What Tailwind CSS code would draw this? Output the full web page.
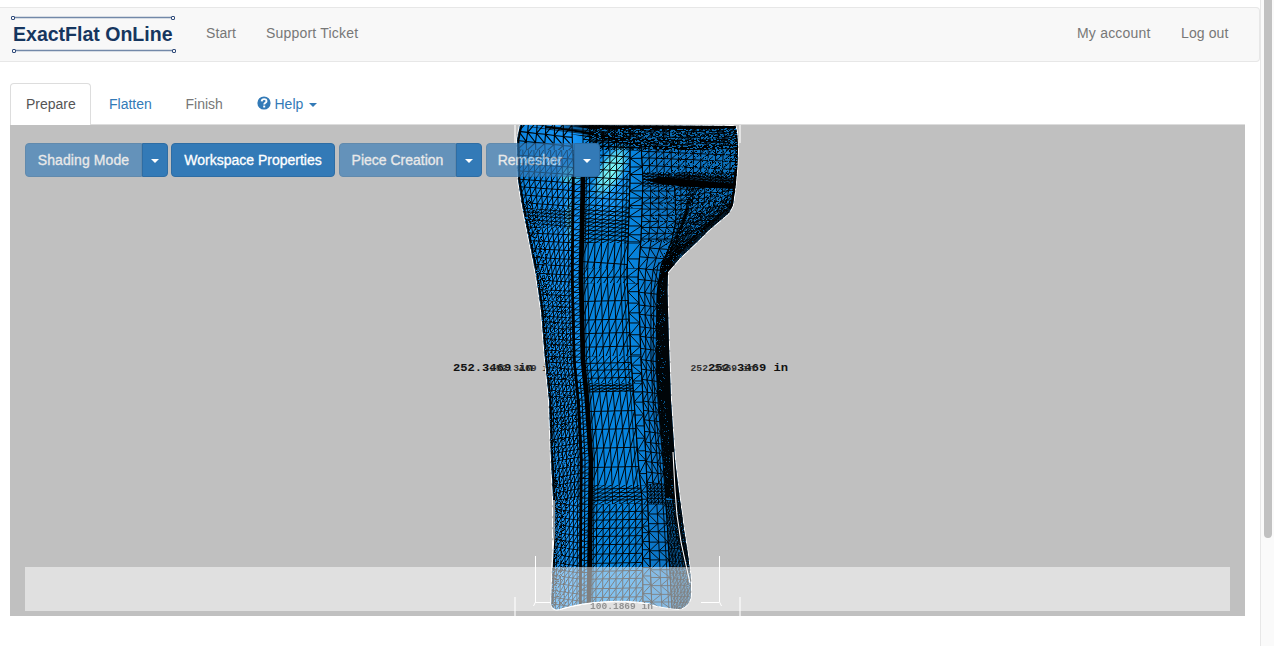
<!DOCTYPE html>
<html lang="en">
<head>
<meta charset="utf-8">
<title>ExactFlat OnLine</title>
<script src="https://cdn.jsdelivr.net/npm/@tailwindcss/browser@4"></script>
</head>
<body class="flex h-[646px] overflow-hidden bg-white font-['Liberation_Sans',Arial,sans-serif] text-[14px] leading-5 text-[#777]">
<div class="w-[1260px] shrink-0 pt-[7px]">
  <nav class="flex h-[55px] rounded-r border border-l-0 border-[#e7e7e7] bg-[#f8f8f8] pl-[10px]">
    <svg class="h-[53px] w-[168px]" viewBox="10 8 168 53" fill="#f8f8f8" stroke="#324d7c">
      <path d="M14 17.5H171M16 50.5H172" stroke="#7288a8" stroke-width="1.4"/>
      <rect x="11.5" y="16.5" width="3" height="3" rx=".5"/><rect x="171.500" y="16.500" width="3" height="3" rx=".5"/>
      <rect x="12.500" y="49.500" width="3" height="3" rx=".5"/><rect x="172.500" y="49.500" width="3" height="3" rx=".5"/>
      <text x="13" y="41" font-size="20" font-weight="700" fill="#16365f" stroke="none" textLength="159.500" lengthAdjust="spacingAndGlyphs">ExactFlat OnLine</text>
    </svg>
    <div class="flex grow pt-[15px] pl-[28px]">
      <a class="w-[60px] tracking-[0.1px]">Start</a><a class="tracking-[0.2px]">Support Ticket</a>
      <a class="ml-auto w-[104px] tracking-[0.2px]">My account</a><a class="w-[78px] tracking-[0.1px]">Log out</a>
    </div>
  </nav>
  <div class="mt-[21px] ml-[10px] w-[1235px]">
    <div class="flex h-[42px] border-b border-[#ddd]">
      <a class="h-[42px] w-[81px] rounded-t border border-b-0 border-[#ddd] bg-white pt-[10px] pl-[15px] text-[#555]">Prepare</a>
      <a class="w-[76.500px] pt-[11px] pl-[18px] text-[#337ab7]">Flatten</a>
      <a class="w-[89px] pt-[11px] pl-[18px]">Finish</a>
      <a class="flex pt-[11px] text-[#337ab7]">
        <svg class="mt-[2px] mr-[4px] h-[14px] w-[14px]" viewBox="0 0 14 14"><circle cx="7" cy="7" r="6.600" fill="#337ab7"/><path d="M4.700 5.400C4.800 2.400 9.500 2.300 9.500 5.200C9.500 6.900 7.200 6.700 7.200 8.600" fill="none" stroke="#fff" stroke-width="1.900"/><rect x="6.200" y="9.600" width="2" height="1.900" fill="#fff"/></svg>
        Help<svg class="mt-[9px] ml-[6px] h-[4px] w-[8px]" viewBox="0 0 8 4"><path d="M0 0H8L4 4Z" fill="#337ab7"/></svg></a>
    </div>
    <main class="relative flex h-[491px] flex-col justify-between overflow-hidden bg-[#c0c0c0] px-[15px] pt-[18px] pb-[5px]">
      <svg class="absolute inset-0" width="1235" height="491" viewBox="10 125 1235 491" font-family="'Liberation Mono',monospace" font-weight="700" fill="#111">
        <g font-size="10"><text x="453" y="371" textLength="80" lengthAdjust="spacingAndGlyphs">252.3469 in</text><text x="708" y="371" textLength="80" lengthAdjust="spacingAndGlyphs">252.3469 in</text></g>
        <g font-size="8.500" fill="#333"><text x="490" y="371" textLength="64" lengthAdjust="spacingAndGlyphs">252.3469 in</text><text x="690.500" y="371" textLength="64" lengthAdjust="spacingAndGlyphs">252.3469 in</text></g>
      </svg>
      <canvas id="mesh" class="absolute inset-0" width="1235" height="491"></canvas>
      <svg class="absolute inset-0" width="1235" height="491" viewBox="10 125 1235 491" fill="none" stroke="#fff">
        <path d="M535.500 556V602L533.500 606M535 602.500H550M719.500 556V602L721.500 606M701 602.500H719"/>
        <path d="M515 597V616M740 597V616M515 125V143M740 125V143" stroke="#eee" stroke-width="1.500"/>
        <text x="590" y="609" font-family="'Liberation Mono',monospace" font-weight="700" font-size="8.500" fill="#222" stroke="none" textLength="63" lengthAdjust="spacingAndGlyphs">100.1869 in</text>
      </svg>
      <div class="relative flex h-[34px] text-white [-webkit-text-stroke:0.3px]">
        <div class="mr-[3px] flex">
          <button class="w-[117px] rounded-l border border-[#2e6da4] bg-[#337ab7] tracking-[0.1px] opacity-65">Shading Mode</button>
          <button class="flex w-[26px] items-center justify-center rounded-r border border-[#2e6da4] bg-[#337ab7]"><svg class="mt-px h-[4px] w-[8px]" viewBox="0 0 8 4"><path d="M0 0H8L4 4Z" fill="#fff"/></svg></button>
        </div>
        <button class="mr-[4px] w-[164px] rounded border border-[#2e6da4] bg-[#337ab7]">Workspace Properties</button>
        <div class="mr-[4px] flex">
          <button class="w-[117px] rounded-l border border-[#2e6da4] bg-[#337ab7] opacity-65">Piece Creation</button>
          <button class="flex w-[26px] items-center justify-center rounded-r border border-[#2e6da4] bg-[#337ab7]"><svg class="mt-px h-[4px] w-[8px]" viewBox="0 0 8 4"><path d="M0 0H8L4 4Z" fill="#fff"/></svg></button>
        </div>
        <div class="flex">
          <button class="w-[88px] rounded-l border border-[#2e6da4] bg-[#337ab7] opacity-65">Remesher</button>
          <button class="flex w-[26px] items-center justify-center rounded-r border border-[#2e6da4] bg-[#337ab7]"><svg class="mt-px h-[4px] w-[8px]" viewBox="0 0 8 4"><path d="M0 0H8L4 4Z" fill="#fff"/></svg></button>
        </div>
      </div>
      <div class="relative h-[44px] bg-white/50"></div>
    </main>
  </div>
</div>
<div class="h-[646px] w-[14px] border-l border-[#e7e7e7] bg-[#fafafa] pl-[3px]"><div class="h-[538px] w-[8px] rounded-b-full bg-[#c1c1c1]"></div></div>
<script>
const c = document.getElementById('mesh').getContext('2d');
c.translate(-10, -125);
let seed = 7;
const rnd = () => (seed = (seed * 16807) % 2147483647) / 2147483647;
// Profile curves: [y, x] control points, interpolated linearly.
const at = (p, y) => {
  if (y <= p[0][0]) return p[0][1];
  for (let i = 1; i < p.length; i++) if (y <= p[i][0]) {
    const a = p[i - 1], b = p[i];
    return a[1] + (b[1] - a[1]) * (y - a[0]) / (b[0] - a[0]);
  }
  return p[p.length - 1][1];
};
const L = [[125,520],[140,517],[180,518],[205,522],[230,527],[255,532],[275,536],[310,541],[360,545],[400,549],[460,551],[497,553],[550,553],[610,551]];
const S1 = [[125,572],[180,574],[275,573],[360,575],[400,579],[460,582],[610,581]];
const S2 = [[125,583],[180,583],[275,581],[360,583],[400,587],[460,591],[610,589]];
const C = [[125,630],[180,630],[275,627],[360,631],[400,634],[460,638],[500,642],[610,643]];
const D = [[125,640],[180,643],[240,641],[275,638],[360,641],[400,643],[460,646],[610,652]];
const E = [[125,672],[220,676],[240,672],[265,661],[290,657],[360,656],[400,658],[460,663],[520,667],[610,672]];
const R = [[125,735],[132,737],[150,738],[170,737],[190,735],[205,733],[213,729],[230,709],[243,696],[258,680],[272,668],[290,667.5],[345,669],[400,671],[430,673],[460,675],[500,680],[530,684],[555,688],[580,691],[600,691],[610,685]];
const shape = new Path2D();
shape.moveTo(at(L, 125), 125);
for (let y = 127; y < 604; y += 2) shape.lineTo(at(L, y), y);
shape.quadraticCurveTo(552, 611, 560, 609);
shape.bezierCurveTo(585, 601, 625, 599, 650, 604);
shape.quadraticCurveTo(663, 608, 680, 609);
shape.quadraticCurveTo(690, 606, 691, 595);
for (let y = 594; y >= 125; y -= 2) shape.lineTo(at(R, y), y);
shape.closePath();
c.lineWidth = 2; c.strokeStyle = '#fff'; c.setLineDash([9, 2]); c.stroke(shape); c.setLineDash([]);
c.save(); c.clip(shape);
let g = c.createLinearGradient(515, 0, 740, 0);
g.addColorStop(0, '#0a82dc'); g.addColorStop(.25, '#1897fa'); g.addColorStop(.34, '#0785df'); g.addColorStop(.52, '#0785df'); g.addColorStop(.62, '#0c76c8'); g.addColorStop(1, '#0d70ba');
c.fillStyle = g; c.fillRect(500, 120, 250, 495);
// specular highlights
const glow = (x, y, rx, ry, rot, col) => {
  c.save(); c.translate(x, y); c.rotate(rot); c.scale(rx, ry);
  const q = c.createRadialGradient(0, 0, 0, 0, 0, 1);
  q.addColorStop(0, col); q.addColorStop(.5, col + 'c0'); q.addColorStop(1, col + '00');
  c.fillStyle = q; c.fillRect(-1, -1, 2, 2); c.restore();
};
glow(610, 190, 24, 50, .2, '#1c9dff'); glow(611, 171, 14, 31, .5, '#83fff6'); glow(570, 175, 14, 12, 0, '#55d8ee'); glow(569, 220, 4, 30, 0, '#42bcf0');
c.strokeStyle = '#000';
// Triangulated strip between two profiles.
function strip(A, B, y0, y1, n, step, o = {}) {
  const rows = [];
  const sl = o.slope || 0, w = o.w || .8, j = o.jit || .2;
  let y = y0 - Math.max(sl, 0);
  while (y <= y1 + step + Math.max(-sl, 0)) { rows.push(y); y += step * (1 + (rnd() - .5) * .35); }
  const pt = (yy, k) => { const a = at(A, yy), b = at(B, yy); return [a + (b - a) * k / n, yy + sl * k / n + (rnd() - .5) * j]; };
  c.lineWidth = w;
  const grid = rows.map(r => Array.from({length: n + 1}, (_, k) => pt(r, k)));
  c.save(); c.beginPath(); c.rect(500, y0, 250, y1 - y0); c.clip(); c.beginPath();
  for (let i = 0; i < grid.length; i++) for (let k = 0; k <= n; k++) {
    const p = grid[i][k];
    if (k < n) { c.moveTo(...p); c.lineTo(...grid[i][k + 1]); }
    if (i + 1 < grid.length) {
      if (!(o.open && k % n)) { c.moveTo(...p); c.lineTo(...grid[i + 1][k]); }
      if (k < n) {
        if (o.zig && i % 2) { c.moveTo(...p); c.lineTo(...grid[i + 1][k + 1]); }
        else { c.moveTo(...grid[i][k + 1]); c.lineTo(...grid[i + 1][k]); }
      }
    }
  }
  c.stroke(); c.restore();
}
const bands = [[125,150,6],[150,208,7],[208,243,4.2],[243,268,22],[268,283,9],[283,356,16],[356,383,7],[383,392,3.2],[392,485,18],[485,504,3.8],[504,606,8.2]];
for (const [a, b, s] of bands) {
  strip(S2, C, a, b, a >= 504 ? 8 : 7, s, {slope: a < 245 ? 3 : -1, w: .95});
  strip(C, D, a, b, 1, Math.max(s * .65, 8), {zig: 1, w: .95});
}
strip(L, S1, 125, 150, 6, 11, {w: 1.1, slope: 6, zig: 1});
strip(L, S1, 150, 208, 10, 8, {w: .95, slope: 4});
strip(L, S1, 208, 228, 11, 3.6, {w: .9, slope: 4});
strip(L, S1, 228, 285, 9, 8, {w: .95, slope: 2});
strip(L, S1, 285, 400, 8, 5.5, {w: .95, slope: 2});
strip(L, S1, 400, 500, 8, 7, {w: .95, slope: -5});
strip(L, S1, 500, 612, 7, 7, {w: .9, slope: 4});
strip(S1, S2, 150, 612, 1, 6, {w: .9});
strip(D, E, 240, 484, 3, 11, {w: .95, slope: 2, zig: 1});
strip(D, E, 484, 504, 5, 3.6, {w: .95});
strip(D, E, 504, 612, 2, 9, {w: .9, zig: 1});
// hip panel
strip(D, R, 148, 172, 13, 7, {w: .95, slope: 4});
strip(D, R, 172, 186, 18, 3.2, {w: 1, slope: 5});
strip(D, E, 186, 242, 4, 6, {w: .9, zig: 1});
strip(E, R, 186, 270, 10, 5, {w: .95, jit: 2, slope: -5});
// waistband rows
strip([[125,590]], R, 118, 150, 24, 4.8, {w: 1, slope: 5});
c.fillStyle = '#000';
const poly = (pts, al = 1) => { c.globalAlpha = al; c.beginPath(); pts.forEach((p, i) => i ? c.lineTo(...p) : c.moveTo(...p)); c.fill(); c.globalAlpha = 1; };
poly([[565,124],[740,124],[740,128],[620,128],[590,129]]);
poly([[560,126],[620,128],[740,130],[740,149],[655,149],[610,141]], .35);
c.save(); c.beginPath(); c.moveTo(530,125); c.lineTo(740,125); c.lineTo(740,149); c.lineTo(655,150); c.lineTo(610,141); c.lineTo(530,127); c.closePath(); c.clip();
for (let i = 0; i < 11; i++) { c.beginPath(); c.lineWidth = i % 4 == 1 ? 1.9 : .7; c.moveTo(530, 115 + i * 3); c.quadraticCurveTo(630, 130 + i * 3, 740, 124 + i * 3); c.stroke(); }
c.restore();
c.lineWidth = 2.2; c.beginPath(); c.moveTo(545,127); c.quadraticCurveTo(600,133,628,143); c.quadraticCurveTo(660,151,740,146); c.stroke();
poly([[646,180],[660,177],[737,184],[737,189],[690,187],[660,184]]);
poly([[655,175],[690,172],[737,180],[737,184],[660,181]], .4);
// Solid line following a profile.
const line = (P, dx, y0, y1, w) => { c.lineWidth = w; c.beginPath(); for (let y = y0; y <= y1; y += 3) c.lineTo(at(P, y) + dx, y); c.stroke(); };
line(S1, -1, 175, 612, 2.4); line(S2, 0, 175, 612, 4.8); line(S2, 3.5, 175, 612, .8);
line(S1, 3, 380, 612, 1); line(L, 1.5, 125, 612, 1.8);
line(C, -3, 175, 490, .8); line(E, -3, 262, 612, .9);
line(R, -1, 125, 210, 3);
for (let i = 0; i < 5; i++) { c.lineWidth = .9; c.beginPath(); c.moveTo(690 + i * 2, 188); c.quadraticCurveTo(686 - i, 222, 664 + i * 2, 262); c.stroke(); }
// shadowed inner side of the leg
const edge = (a, b, y0, y1) => { const p = []; for (let y = y0; y <= y1; y += 4) p.push([at(a, y), y]); for (let y = y1; y >= y0; y -= 4) p.push([at(b, y) + 1, y]); return p; };
poly([[733,203],[740,205],[668,275],[656,285],[670,258],[700,230]], .8);
poly(edge(E, R, 262, 500), .96);
poly(edge(E, R, 500, 610), .25);
strip(E, R, 500, 612, 6, 6, {w: .9, jit: 1.5});
poly([[672,498],[681,498],[686,530],[692,575],[686,572],[676,535]], .7);
for (let i = 0; i < 900; i++) {
  const y = 230 + rnd() * 378, a = at(E, y), b = at(R, y), x = a + (b - a) * rnd() * (y < 262 || y > 500 ? 1 : .65);
  if (y > 262 && y < 500 && i % 3) { continue; }
  c.fillStyle = i % 2 ? '#07538a' : '#031c30'; c.fillRect(Math.round(x), Math.round(y), 1, 1);
}
for (let i = 0; i < 900; i++) {
  const y = 128 + rnd() * 22, x = 590 + rnd() * 148;
  if (y > 141 + (x - 610) * .2) continue;
  c.fillStyle = i % 2 ? '#0b69ae' : '#000'; c.fillRect(Math.round(x), Math.round(y), 1 + i % 2, 1);
}
for (let i = 0; i < 1500; i++) {
  const y = 150 + rnd() * 110, x = 650 + Math.sqrt(rnd()) * 88;
  c.fillStyle = i % 2 ? '#000' : '#0b70bc'; 
  if (y > 176 && y < 190 || x + y > 925) c.fillStyle = '#000';
  c.fillRect(Math.round(x), Math.round(y), 1, 1);
}
for (let i = 0; i < 1300; i++) {
  const y = 200 + rnd() * 405, x = at(L, y) + rnd() * (y > 290 && y < 480 ? 26 : 14);
  c.fillStyle = i % 3 ? '#000' : '#0b78cc'; c.fillRect(Math.round(x), Math.round(y), 1, 1);
}
c.restore();
// white outline glimpses along the lower leg
c.strokeStyle = '#fff'; c.lineWidth = 1.1;
c.beginPath(); [[673,452],[675,490],[677,515],[681,542],[686,565],[690,583]].forEach(p => c.lineTo(...p)); c.stroke();
c.beginPath(); c.moveTo(554,500); c.lineTo(554,535); c.lineTo(552,568); c.stroke();
c.beginPath(); c.moveTo(560,609.500); c.bezierCurveTo(585,601,625,599,650,604); c.stroke();
</script>
</body>
</html>
